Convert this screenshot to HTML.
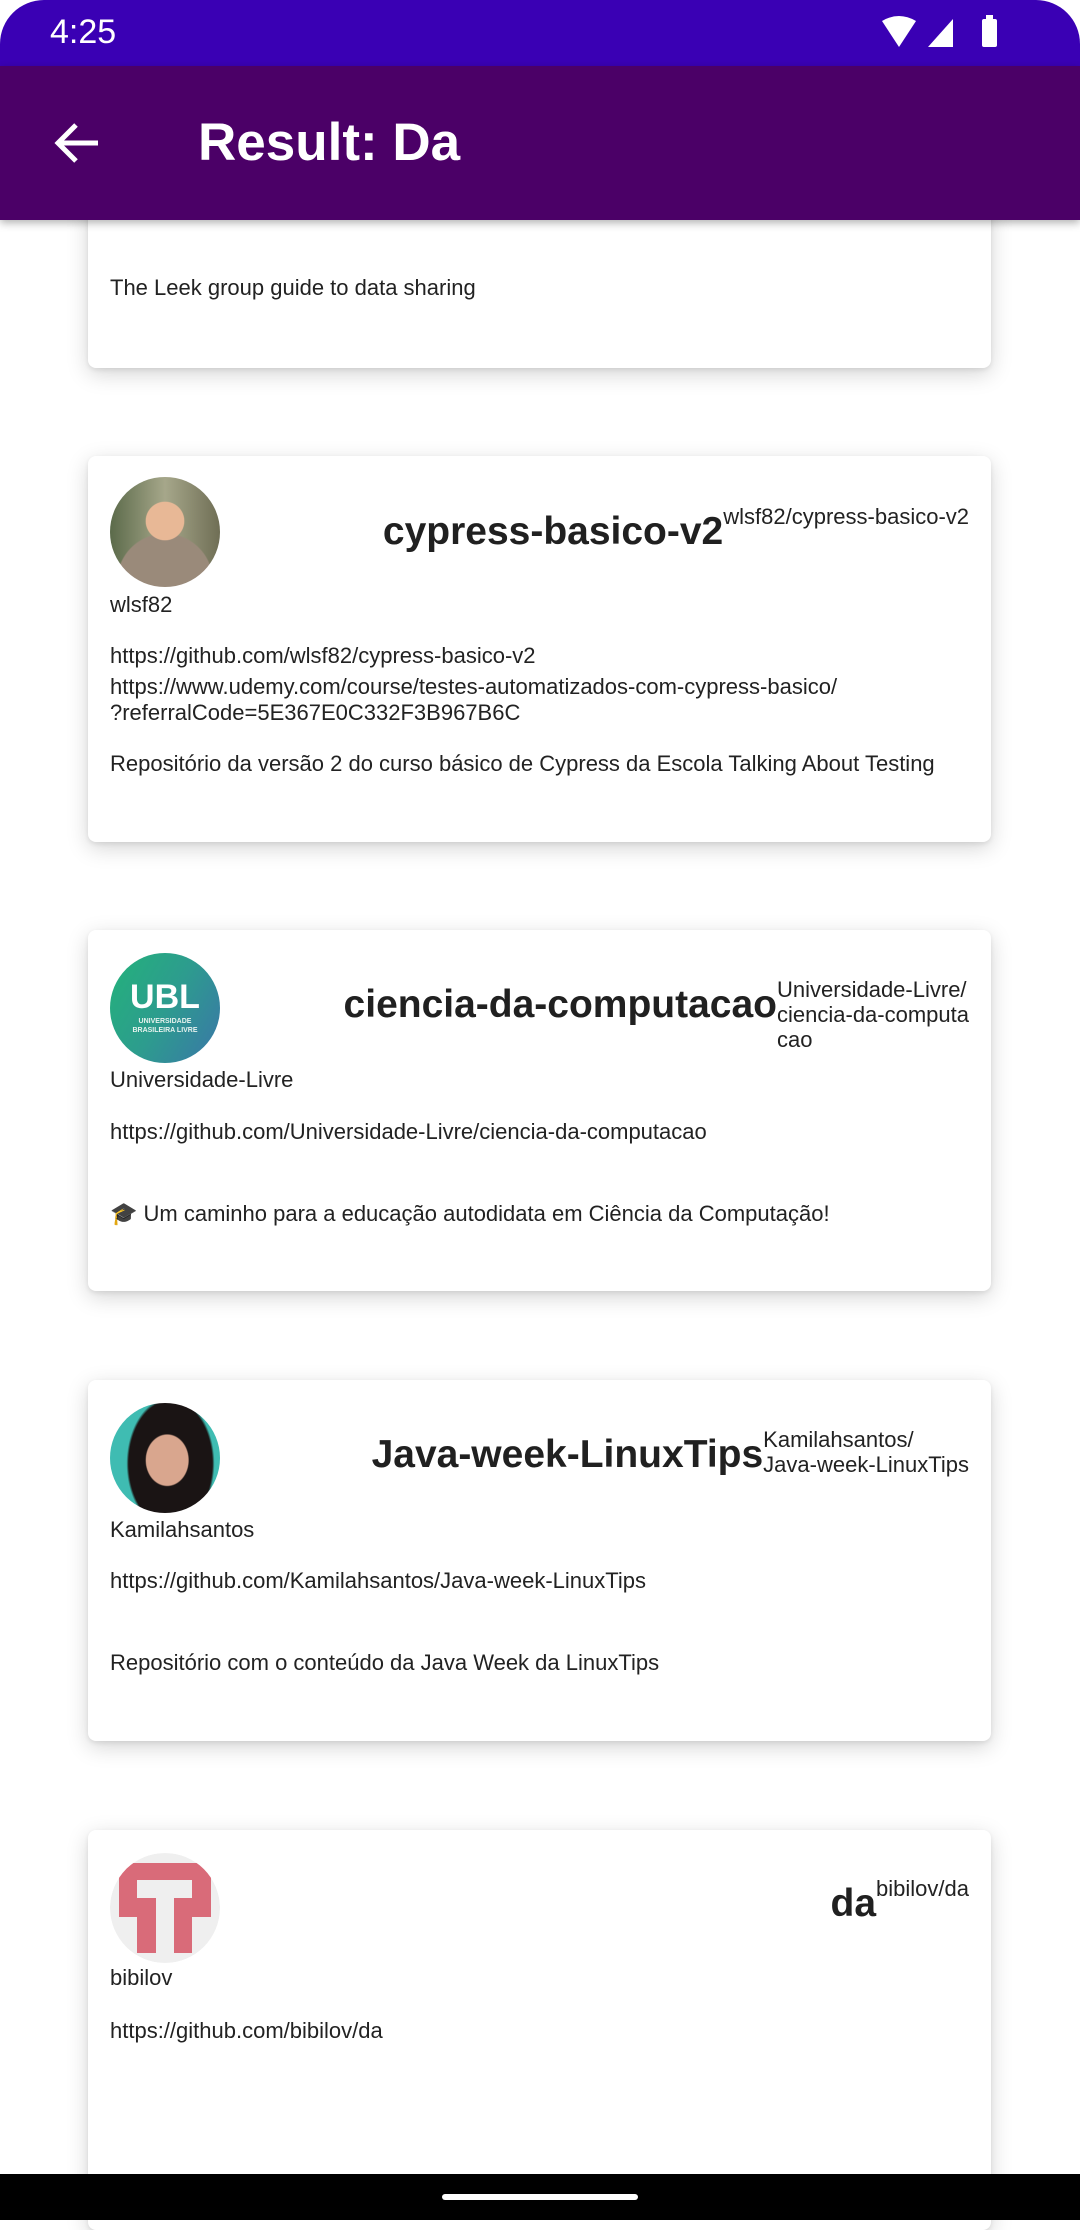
<!DOCTYPE html>
<html><head><meta charset="utf-8"><style>
*{margin:0;padding:0;box-sizing:border-box}
body{width:1080px;height:2220px;overflow:hidden;background:#fff;font-family:"Liberation Sans",sans-serif;color:#222;position:relative}
.status{position:absolute;left:0;top:0;width:1080px;height:66px;background:#3a00b4;border-radius:44px 44px 0 0}
.appbar{position:absolute;left:0;top:66px;width:1080px;height:154px;background:#4b0067;box-shadow:0 3px 8px rgba(0,0,0,.3);z-index:5}
.card{position:absolute;left:88px;width:903px;background:#fff;border-radius:8px;box-shadow:0 6px 22px rgba(0,0,0,.17),0 2px 5px rgba(0,0,0,.08)}
.t{position:absolute;left:22px;font-size:22px;line-height:24px;white-space:nowrap}
.av{position:absolute;left:22px;width:110px;height:110px;border-radius:50%;overflow:hidden}
.hd{position:absolute;right:22px;display:flex;align-items:flex-start}
.ti{font-size:39px;font-weight:bold;line-height:40px;white-space:nowrap;color:#202020}
.su{font-size:22px;line-height:25px;margin-top:-8px;white-space:nowrap}
.nav{position:absolute;left:0;top:2174px;width:1080px;height:46px;background:#000}
</style></head><body>
<div class="status">
<div style="position:absolute;left:50px;top:12px;color:#fff;font-size:34px;line-height:40px">4:25</div>
<svg style="position:absolute;left:880px;top:15px" width="130" height="36" viewBox="0 0 130 36">
<path d="M2 6 Q19 -4 36 6 L19 32 Z" fill="#fff"/>
<path d="M48 32 L73 4 L73 32 Z" fill="#fff"/>
<rect x="102" y="4" width="15" height="28" rx="2" fill="#fff"/><rect x="106" y="0" width="7" height="5" fill="#fff"/>
</svg>
</div>
<div class="appbar">
<svg style="position:absolute;left:52px;top:54px" width="50" height="46" viewBox="0 0 50 46"><path d="M46 23 H8 M24 5 L6 23 L24 41" stroke="#fff" stroke-width="5" fill="none"/></svg>
<div style="position:absolute;left:198px;top:47px;color:#fff;font-size:53px;line-height:60px;font-weight:bold">Result: Da</div>
</div>

<div class="card" style="top:150px;height:218px">
<div class="t" style="top:126px">The Leek group guide to data sharing</div>
</div>

<div class="card" style="top:456px;height:386px">
<div class="av" style="top:21px;background:radial-gradient(circle at 50% 40%,#e8b896 0 22%,transparent 23%),radial-gradient(circle at 50% 95%,#9a8a7a 0 40%,transparent 41%),linear-gradient(90deg,#5b6a4a,#a6a78a 50%,#6f6e55)"></div>
<div class="hd" style="top:56px"><div class="ti">cypress-basico-v2</div><div class="su">wlsf82/cypress-basico-v2</div></div>
<div class="t" style="top:137px">wlsf82</div>
<div class="t" style="top:188px">https://github.com/wlsf82/cypress-basico-v2</div>
<div class="t" style="top:218px;line-height:26px">https://www.udemy.com/course/testes-automatizados-com-cypress-basico/<br>?referralCode=5E367E0C332F3B967B6C</div>
<div class="t" style="top:296px">Repositório da versão 2 do curso básico de Cypress da Escola Talking About Testing</div>
</div>

<div class="card" style="top:930px;height:361px">
<div class="av" style="top:23px;background:linear-gradient(120deg,#23b27a,#2d9c8e 50%,#3a76a8)">
<div style="position:absolute;left:0;width:110px;top:26px;text-align:center;color:#fff;font-weight:bold;font-size:34px;line-height:36px">UBL</div>
<div style="position:absolute;left:0;width:110px;top:64px;text-align:center;color:#e6f2ee;font-size:7px;line-height:9px;font-weight:bold">UNIVERSIDADE<br>BRASILEIRA LIVRE</div>
</div>
<div class="hd" style="top:55px"><div class="ti">ciencia-da-computacao</div><div class="su">Universidade-Livre/<br>ciencia-da-computa<br>cao</div></div>
<div class="t" style="top:138px">Universidade-Livre</div>
<div class="t" style="top:190px">https://github.com/Universidade-Livre/ciencia-da-computacao</div>
<div class="t" style="top:272px">🎓 Um caminho para a educação autodidata em Ciência da Computação!</div>
</div>

<div class="card" style="top:1380px;height:361px">
<div class="av" style="top:23px;background:radial-gradient(ellipse 20% 24% at 52% 52%,#d9a68e 0 95%,transparent 100%),radial-gradient(ellipse 40% 60% at 55% 55%,#1a1414 0 95%,transparent 100%),#3fbcb2"></div>
<div class="hd" style="top:55px"><div class="ti">Java-week-LinuxTips</div><div class="su">Kamilahsantos/<br>Java-week-LinuxTips</div></div>
<div class="t" style="top:138px">Kamilahsantos</div>
<div class="t" style="top:189px">https://github.com/Kamilahsantos/Java-week-LinuxTips</div>
<div class="t" style="top:271px">Repositório com o conteúdo da Java Week da LinuxTips</div>
</div>

<div class="card" style="top:1830px;height:400px">
<div class="av" style="top:23px">
<svg width="110" height="110" viewBox="0 0 110 110"><circle cx="55" cy="55" r="55" fill="#efefef"/>
<path d="M9 10 H101 V64 H82 V100 H64 V45 H82 V27 H27 V45 H46 V100 H27 V64 H9 Z" fill="#d96b79"/></svg>
</div>
<div class="hd" style="top:54px"><div class="ti">da</div><div class="su">bibilov/da</div></div>
<div class="t" style="top:136px">bibilov</div>
<div class="t" style="top:189px">https://github.com/bibilov/da</div>
</div>

<div class="nav"><div style="position:absolute;left:442px;top:20px;width:196px;height:6px;border-radius:3px;background:#fff"></div></div>
</body></html>
